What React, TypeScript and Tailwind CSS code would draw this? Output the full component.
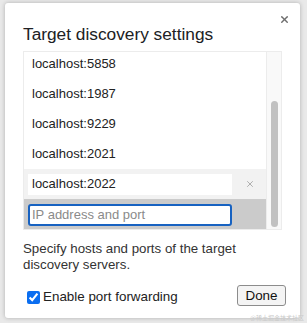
import { X } from "lucide-react";

const HOSTS = ["localhost:5858", "localhost:1987", "localhost:9229", "localhost:2021"];

export default function App() {
  return (
    <div
      className="relative w-[307px] h-[323px] bg-[#e9e9e9] pt-[3px] pl-[5px] overflow-hidden"
      style={{ fontFamily: '"Liberation Sans", Arial, sans-serif' }}
    >
      <div className="relative w-[295px] h-[315px] bg-white rounded-[3px] shadow-[0_0_4px_rgba(0,0,0,0.25)] pl-[18px] pr-[13px] pt-[21px] text-[#222]">
        {/* Close */}
        <button className="absolute right-[10px] top-[11px] text-[#6e6e6e]">
          <X size={11} strokeWidth={3.2} />
        </button>

        <h1 className="text-[17.3px] leading-[20px] text-[#202124]">Target discovery settings</h1>

        {/* Host list */}
        <div className="mt-[7px] w-[259px] h-[179px] border border-[#ececec] flex overflow-hidden">
          <div className="flex-1 -mt-[3px] text-[13px]">
            {HOSTS.map((h) => (
              <div key={h} className="h-[30px] flex items-center pl-[8px]">
                {h}
              </div>
            ))}
            <div className="h-[30px] flex items-center bg-[#f2f2f2] pl-[4px]">
              <div className="w-[204px] h-[21px] bg-white flex items-center pl-[4px]">localhost:2022</div>
              <div className="flex-1 flex justify-end pr-[11px] text-[#a8a8a8]">
                <X size={10} strokeWidth={2.2} />
              </div>
            </div>
            <div className="h-[31px] flex items-center bg-[#cbcbcb] pl-[4px]">
              <input
                placeholder="IP address and port"
                className="w-[204px] h-[22px] bg-white border-2 border-[#1762c1] rounded-[3px] px-[2px] text-[13px] placeholder:text-[#8a8a8a] outline-none"
              />
            </div>
          </div>
          <div className="w-[15px] bg-[#f9f9f9] border-l border-[#ececec] flex justify-center pt-[49px] pb-[2px]">
            <div className="w-[7px] h-full bg-[#c1c1c1] rounded-full" />
          </div>
        </div>

        <p className="mt-[11px] text-[13.3px] leading-[16px] text-[#333]">
          Specify hosts and ports of the target discovery servers.
        </p>

        <div className="mt-[14px] flex items-center justify-between pl-[4px]">
          <label className="flex items-center gap-[3px] text-[13.4px] text-[#222]">
            <input type="checkbox" defaultChecked className="w-[13px] h-[13px] accent-[#0b6ef0] m-0" />
            Enable port forwarding
          </label>
          <button className="h-[21px] w-[49px] border border-[#8c8c8c] rounded-[3px] bg-[#f4f4f4] text-[13.4px] text-[#111] mr-[1px] -mt-[3px]">
            Done
          </button>
        </div>
      </div>
      <div className="absolute right-[3px] bottom-[1px] text-[6px] text-[#c9c9c9]" style={{ fontFamily: '"Noto Sans CJK SC", sans-serif' }}>
        @稀土掘金技术社区
      </div>
    </div>
  );
}
